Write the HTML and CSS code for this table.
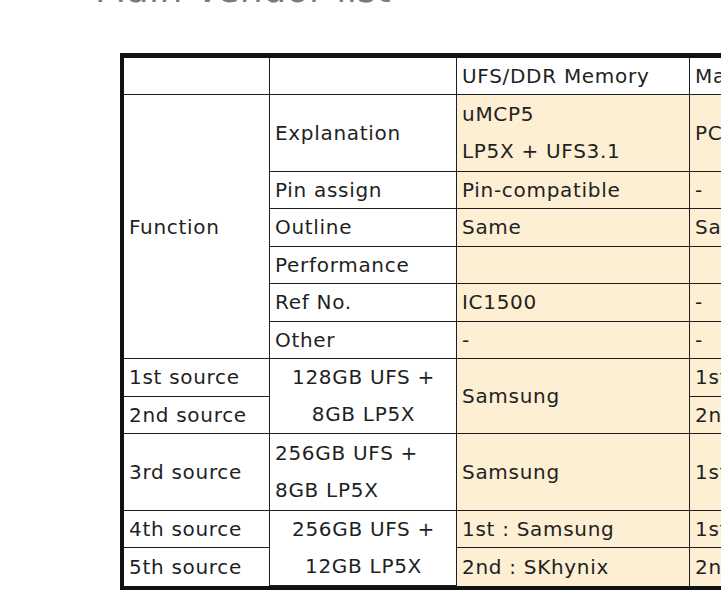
FILE: index.html
```html
<!DOCTYPE html>
<html lang="en">
<head>
<meta charset="utf-8">
<title>Main Vendor list</title>
<link rel="stylesheet" href="styles.css">
</head>
<body>
<main class="page">
  <h1 class="title">Main Vendor list</h1>
  <table class="vendor-table">
    <colgroup>
      <col class="c1"><col class="c2"><col class="c3"><col class="c4">
    </colgroup>
    <tbody>
      <tr class="row-head">
        <td></td><td></td><td>UFS/DDR Memory</td><td>Main Board</td>
      </tr>
      <tr class="row-tall">
        <td rowspan="6">Function</td>
        <td>Explanation</td>
        <td class="hl two">uMCP5<br>LP5X + UFS3.1</td>
        <td class="hl">PCB</td>
      </tr>
      <tr class="row">
        <td>Pin assign</td><td class="hl">Pin-compatible</td><td class="hl">-</td>
      </tr>
      <tr class="row">
        <td>Outline</td><td class="hl">Same</td><td class="hl">Same</td>
      </tr>
      <tr class="row">
        <td>Performance</td><td class="hl"></td><td class="hl"></td>
      </tr>
      <tr class="row">
        <td>Ref No.</td><td class="hl">IC1500</td><td class="hl">-</td>
      </tr>
      <tr class="row">
        <td>Other</td><td class="hl">-</td><td class="hl">-</td>
      </tr>
      <tr class="row">
        <td>1st source</td>
        <td rowspan="2" class="center two">128GB UFS +<br>8GB LP5X</td>
        <td rowspan="2" class="hl">Samsung</td>
        <td class="hl">1st : Samsung</td>
      </tr>
      <tr class="row">
        <td>2nd source</td>
        <td class="hl">2nd : SKhynix</td>
      </tr>
      <tr class="row-tall">
        <td>3rd source</td>
        <td class="two">256GB UFS +<br>8GB LP5X</td>
        <td class="hl">Samsung</td>
        <td class="hl">1st : Samsung</td>
      </tr>
      <tr class="row">
        <td>4th source</td>
        <td rowspan="2" class="center two">256GB UFS +<br>12GB LP5X</td>
        <td class="hl">1st : Samsung</td>
        <td class="hl">1st : Samsung</td>
      </tr>
      <tr class="row">
        <td>5th source</td>
        <td class="hl">2nd : SKhynix</td>
        <td class="hl">2nd : SKhynix</td>
      </tr>
    </tbody>
  </table>
</main>
</body>
</html>
```
FILE: styles.css
```css
html, body {
  margin: 0;
  padding: 0;
  background: #ffffff;
  overflow: hidden;
}

.page {
  width: 1000px;
}

.title {
  margin: -28px 0 0 95px;
  font-family: "DejaVu Sans", sans-serif;
  font-weight: normal;
  font-size: 36px;
  line-height: 36px;
  color: #7a7a7a;
  letter-spacing: 0.5px;
}

.vendor-table {
  margin: 45px 0 0 120px;
  width: 874px;
  table-layout: fixed;
  border-collapse: separate;
  border-spacing: 0;
  border: 4px solid #111;
  border-top-width: 5px;
  font-family: "DejaVu Sans", sans-serif;
  font-size: 20px;
  letter-spacing: 0.7px;
  color: #1f1f1f;
}

.c1 { width: 146px; }
.c2 { width: 187px; }
.c3 { width: 233px; }
.c4 { width: 300px; }

.vendor-table td {
  padding: 0 4px 0 5px;
  border-right: 1px solid #1e1e1e;
  border-bottom: 1px solid #1e1e1e;
  line-height: 36px;
  white-space: nowrap;
  vertical-align: middle;
  text-align: left;
  overflow: hidden;
}

.vendor-table tr:last-child td {
  border-bottom: none;
}

.row-head { height: 32px; }
.row { height: 37.5px; }
.row-tall { height: 76.5px; }

.vendor-table td.two { line-height: 37px; }
.vendor-table td.center { text-align: center; }
.vendor-table td.hl { background: #fcefd3; }
```
